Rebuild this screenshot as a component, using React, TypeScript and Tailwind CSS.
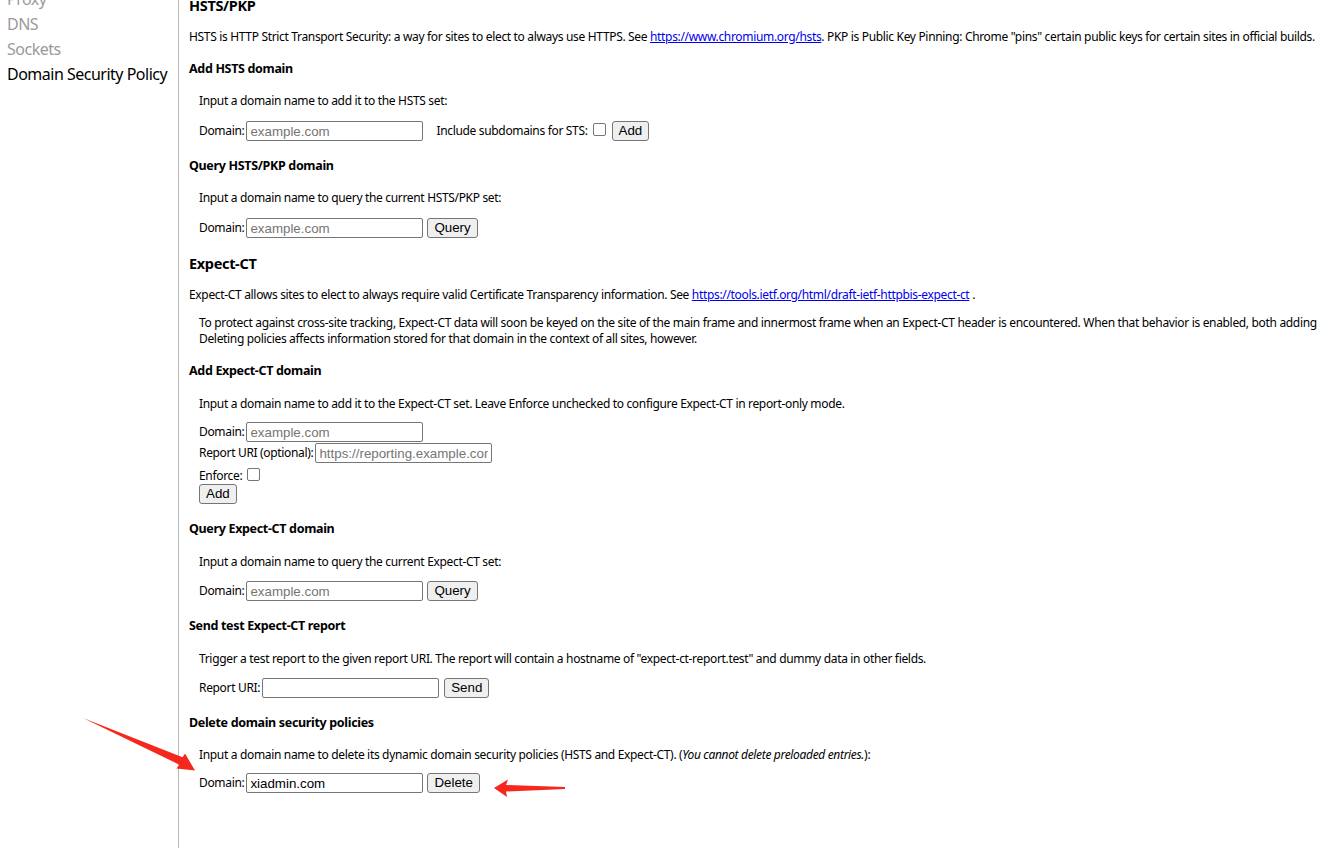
import type { ReactNode } from 'react';

const body = "font-['Noto_Sans',sans-serif] text-[12px] leading-[16px] tracking-[-0.33px] text-black";
const field =
  "h-[20px] w-[177px] rounded-[2px] border border-[#767676] bg-white px-[3px] font-['Liberation_Sans',Arial,sans-serif] text-[13.33px] tracking-normal text-black placeholder:text-[#757575] outline-none";
const button =
  "h-[20px] rounded-[3px] border border-[#767676] bg-[#efefef] px-[6px] font-['Liberation_Sans',Arial,sans-serif] text-[13.33px] leading-[16px] tracking-normal text-black";

function Checkbox() {
  return <span className="inline-block h-[13px] w-[13px] rounded-[2px] border border-[#767676] bg-white" />;
}

function H2({ children, className }: { children: ReactNode; className: string }) {
  return <h2 className={`text-[14.5px] font-bold leading-[18px] ${className}`}>{children}</h2>;
}

function H3({ children, className }: { children: ReactNode; className: string }) {
  return <h3 className={`text-[12.5px] font-bold leading-[16px] ${className}`}>{children}</h3>;
}

function Link({ children }: { children: ReactNode }) {
  return <span className="text-[#0000ee] underline">{children}</span>;
}

function DomainRow({ className, value, action, placeholder = 'example.com' }: { className: string; value?: string; action: string; placeholder?: string }) {
  return (
    <div className={`flex h-[20px] items-center ${className}`}>
      <span className="mr-[2px]">Domain:</span>
      <input className={field} placeholder={placeholder} defaultValue={value} />
      <button className={`${button} ml-[4px]`}>{action}</button>
    </div>
  );
}

const sidebarItems = [
  { label: 'Proxy', active: false },
  { label: 'DNS', active: false },
  { label: 'Sockets', active: false },
  { label: 'Domain Security Policy', active: true }
];

export default function App() {
  return (
    <div className={`relative flex h-[848px] w-[1317px] overflow-hidden bg-white ${body}`}>
      <nav className="w-[179px] shrink-0 border-r border-[#b8b8b8] pl-[7px]">
        <ul className="mt-[-13px]">
          {sidebarItems.map((item) => (
            <li
              key={item.label}
              className={`h-[25px] whitespace-nowrap text-[16px] leading-[25px] tracking-[-0.5px] ${item.active ? 'text-black' : 'text-[#9a9a9a]'}`}
            >
              {item.label}
            </li>
          ))}
        </ul>
      </nav>

      <main className="min-w-0 flex-1 pl-[10px]">
        <H2 className="mt-[-4px]">HSTS/PKP</H2>
        <p className="mt-[15px] whitespace-nowrap">
          HSTS is HTTP Strict Transport Security: a way for sites to elect to always use HTTPS. See{' '}
          <Link>https://www.chromium.org/hsts</Link>. PKP is Public Key Pinning: Chrome "pins" certain public keys for
          certain sites in official builds.
        </p>

        <H3 className="mt-[16px]">Add HSTS domain</H3>
        <div className="pl-[10px]">
          <p className="mt-[16px]">Input a domain name to add it to the HSTS set:</p>
          <div className="mt-[12px] flex h-[20px] items-center">
            <span className="mr-[2px]">Domain:</span>
            <input className={field} placeholder="example.com" />
            <span className="ml-[13px]">Include subdomains for STS:</span>
            <span className="mb-[3px] ml-[5px] mr-[6px] flex">
              <Checkbox />
            </span>
            <button className={button}>Add</button>
          </div>
        </div>

        <H3 className="mt-[17px]">Query HSTS/PKP domain</H3>
        <div className="pl-[10px]">
          <p className="mt-[16px]">Input a domain name to query the current HSTS/PKP set:</p>
          <DomainRow className="mt-[12px]" action="Query" />
        </div>

        <H2 className="mt-[16px]">Expect-CT</H2>
        <p className="mt-[15px] whitespace-nowrap">
          Expect-CT allows sites to elect to always require valid Certificate Transparency information. See{' '}
          <Link>https://tools.ietf.org/html/draft-ietf-httpbis-expect-ct</Link> .
        </p>
        <div className="mt-[12px] pl-[10px]">
          <p className="whitespace-nowrap">
            To protect against cross-site tracking, Expect-CT data will soon be keyed on the site of the main frame and
            innermost frame when an Expect-CT header is encountered. When that behavior is enabled, both adding and
            querying Expect-CT policies will only be able to use policies stored in the context of the current site.
          </p>
          <p>Deleting policies affects information stored for that domain in the context of all sites, however.</p>
        </div>

        <H3 className="mt-[16px]">Add Expect-CT domain</H3>
        <div className="pl-[10px]">
          <p className="mt-[17px]">
            Input a domain name to add it to the Expect-CT set. Leave Enforce unchecked to configure Expect-CT in
            report-only mode.
          </p>
          <div className="mt-[10px] flex h-[20px] items-center">
            <span className="mr-[2px]">Domain:</span>
            <input className={field} placeholder="example.com" />
          </div>
          <div className="mt-[1px] flex h-[20px] items-center">
            <span className="mr-[2px]">Report URI (optional):</span>
            <input className={field} placeholder="https://reporting.example.com" />
          </div>
          <div className="mt-[2px] flex h-[18px] items-center">
            <span className="mr-[5px] mt-[3px]">Enforce:</span>
            <Checkbox />
          </div>
          <button className={`${button} mt-[1px] block`}>Add</button>
        </div>

        <H3 className="mt-[17px]">Query Expect-CT domain</H3>
        <div className="pl-[10px]">
          <p className="mt-[17px]">Input a domain name to query the current Expect-CT set:</p>
          <DomainRow className="mt-[11px]" action="Query" />
        </div>

        <H3 className="mt-[17px]">Send test Expect-CT report</H3>
        <div className="pl-[10px]">
          <p className="mt-[17px]">
            Trigger a test report to the given report URI. The report will contain a hostname of
            "expect-ct-report.test" and dummy data in other fields.
          </p>
          <div className="mt-[11px] flex h-[20px] items-center">
            <span className="mr-[2px]">Report URI:</span>
            <input className={field} />
            <button className={`${button} ml-[5px]`}>Send</button>
          </div>
        </div>

        <H3 className="mt-[17px]">Delete domain security policies</H3>
        <div className="pl-[10px]">
          <p className="mt-[16px]">
            Input a domain name to delete its dynamic domain security policies (HSTS and Expect-CT). (
            <i>You cannot delete preloaded entries.</i>):
          </p>
          <DomainRow className="mt-[10px]" action="Delete" value="xiadmin.com" />
        </div>
      </main>

      <svg className="pointer-events-none absolute inset-0" width="1317" height="848" viewBox="0 0 1317 848">
        <polygon
          fill="#f5281e"
          points="83,718 182.6,757.3 185,753.5 195,770.5 176.5,768.5 179.4,764.7"
        />
        <polygon fill="#f5281e" points="494,788 508,779.5 506,785 565,787 565,789 506,791.5 507,797" />
      </svg>
    </div>
  );
}
